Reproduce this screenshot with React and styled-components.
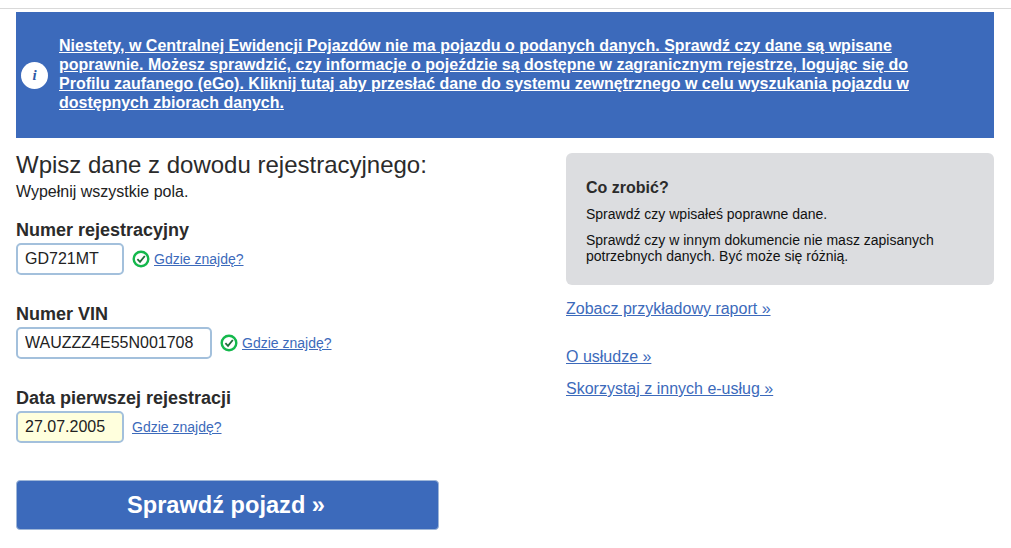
import React from "react";
import styled, { createGlobalStyle } from "styled-components";

const Global = createGlobalStyle`
  html, body { margin: 0; padding: 0; background: #fff; }
  body { font-family: "Liberation Sans", Arial, sans-serif; color: #2b2b2b; }
`;
const Page = styled.div`
  width: 1011px; height: 548px; box-sizing: border-box; overflow: hidden;
  padding: 12px 17px 0 16px; position: relative;
  &::before { content: ""; position: absolute; left: 0; right: 0; top: 8px; height: 1px; background: #d9d9d9; }
`;
const Banner = styled.div`
  height: 126px; background: #3c6abb; display: flex; align-items: center;
  box-sizing: border-box; padding: 0 78px 0 5px; gap: 11px;
`;
const InfoIcon = styled.span`
  flex: none; width: 27px; height: 27px; border-radius: 50%; background: #fff; color: #2f5aa5;
  display: flex; align-items: center; justify-content: center;
  font: italic bold 15px "Liberation Serif", serif;
`;
const BannerLink = styled.a`
  color: #fff; font-weight: 700; font-size: 16px; line-height: 19px; text-decoration: underline;
  position: relative; top: -1px;
`;
const Columns = styled.div`
  display: grid; grid-template-columns: 550px 428px;
`;
const Heading = styled.h2`
  margin: 13px 0 0; font-size: 24px; line-height: 27px; font-weight: 400; color: #2b2b2b;
`;
const Hint = styled.p`
  margin: 4px 0 0; font-size: 16px; line-height: 20px; color: #222;
`;
const Field = styled.div`
  margin-top: ${p => p.$top}px;
`;
const Label = styled.div`
  font-size: 18px; font-weight: 700; line-height: 20px; color: #2b2b2b; margin-bottom: 3px;
`;
const Row = styled.div`
  display: flex; align-items: center;
`;
const Input = styled.input`
  box-sizing: border-box; width: ${p => p.$w}px; height: 32px; border: 2px solid #a3c0dc; border-radius: 5px;
  padding: 0 7px; font: 16px "Liberation Sans", sans-serif; color: #222;
  background: ${p => p.$bg || "#fff"}; outline: none;
`;
const Check = styled.svg`
  flex: none; width: 18px; height: 18px; margin-left: 8px;
`;
const HelpLink = styled.a`
  font-size: 14px; color: #3c6abb; text-decoration: underline; margin-left: ${p => p.$ml}px;
`;
const SubmitButton = styled.button`
  display: block; width: 423px; height: 50px; margin-top: 37px; padding: 0 3px 0 0; border: 1px solid #9fb7d8; border-radius: 4px;
  background: #3c6abb; color: #fff; font: 700 23.6px "Liberation Sans", sans-serif; cursor: pointer;
`;
const Side = styled.aside`
  padding-top: 15px;
`;
const GrayBox = styled.div`
  height: 132px; box-sizing: border-box; background: #dcdde0; border-radius: 6px; padding: 26px 20px 0;
`;
const BoxTitle = styled.h3`
  margin: 0 0 9px; font-size: 16px; line-height: 18px; font-weight: 700; color: #2b2b2b;
`;
const BoxText = styled.p`
  margin: 0 0 10px; font-size: 14px; line-height: 16px; color: #111;
`;
const SideLink = styled.a`
  display: block; width: fit-content; margin-top: ${p => p.$top}px; font-size: 16px; line-height: 16px;
  color: #3c6abb; text-decoration: underline;
`;

const CheckIcon = () => (
  <Check viewBox="0 0 18 18" aria-hidden="true">
    <circle cx="9" cy="9" r="7.3" fill="#fff" stroke="#14b84c" strokeWidth="2.4" />
    <path d="M5.4 9.2 L8 11.8 L12.8 6" fill="none" stroke="#1f6e3a" strokeWidth="1.8" />
  </Check>
);

export default function App() {
  return (
    <Page>
      <Global />
      <Banner>
        <InfoIcon>i</InfoIcon>
        <BannerLink href="#">
          Niestety, w Centralnej Ewidencji Pojazdów nie ma pojazdu o podanych danych. Sprawdź czy dane są wpisane poprawnie. Możesz sprawdzić, czy informacje o pojeździe są dostępne w zagranicznym rejestrze, logując się do Profilu zaufanego (eGo). Kliknij tutaj aby przesłać dane do systemu zewnętrznego w celu wyszukania pojazdu w dostępnych zbiorach danych.
        </BannerLink>
      </Banner>
      <Columns>
        <main>
          <Heading>Wpisz dane z dowodu rejestracyjnego:</Heading>
          <Hint>Wypełnij wszystkie pola.</Hint>
          <Field $top={18}>
            <Label>Numer rejestracyjny</Label>
            <Row>
              <Input $w={108} defaultValue="GD721MT" />
              <CheckIcon />
              <HelpLink href="#" $ml={4}>Gdzie znajdę?</HelpLink>
            </Row>
          </Field>
          <Field $top={29}>
            <Label>Numer VIN</Label>
            <Row>
              <Input $w={196} defaultValue="WAUZZZ4E55N001708" />
              <CheckIcon />
              <HelpLink href="#" $ml={4}>Gdzie znajdę?</HelpLink>
            </Row>
          </Field>
          <Field $top={29}>
            <Label>Data pierwszej rejestracji</Label>
            <Row>
              <Input $w={108} $bg="#ffffdd" defaultValue="27.07.2005" />
              <HelpLink href="#" $ml={8}>Gdzie znajdę?</HelpLink>
            </Row>
          </Field>
          <SubmitButton>Sprawdź pojazd »</SubmitButton>
        </main>
        <Side>
          <GrayBox>
            <BoxTitle>Co zrobić?</BoxTitle>
            <BoxText>Sprawdź czy wpisałeś poprawne dane.</BoxText>
            <BoxText>Sprawdź czy w innym dokumencie nie masz zapisanych potrzebnych danych. Być może się różnią.</BoxText>
          </GrayBox>
          <SideLink href="#" $top={16}>Zobacz przykładowy raport »</SideLink>
          <SideLink href="#" $top={32}>O usłudze »</SideLink>
          <SideLink href="#" $top={16}>Skorzystaj z innych e-usług »</SideLink>
        </Side>
      </Columns>
    </Page>
  );
}
